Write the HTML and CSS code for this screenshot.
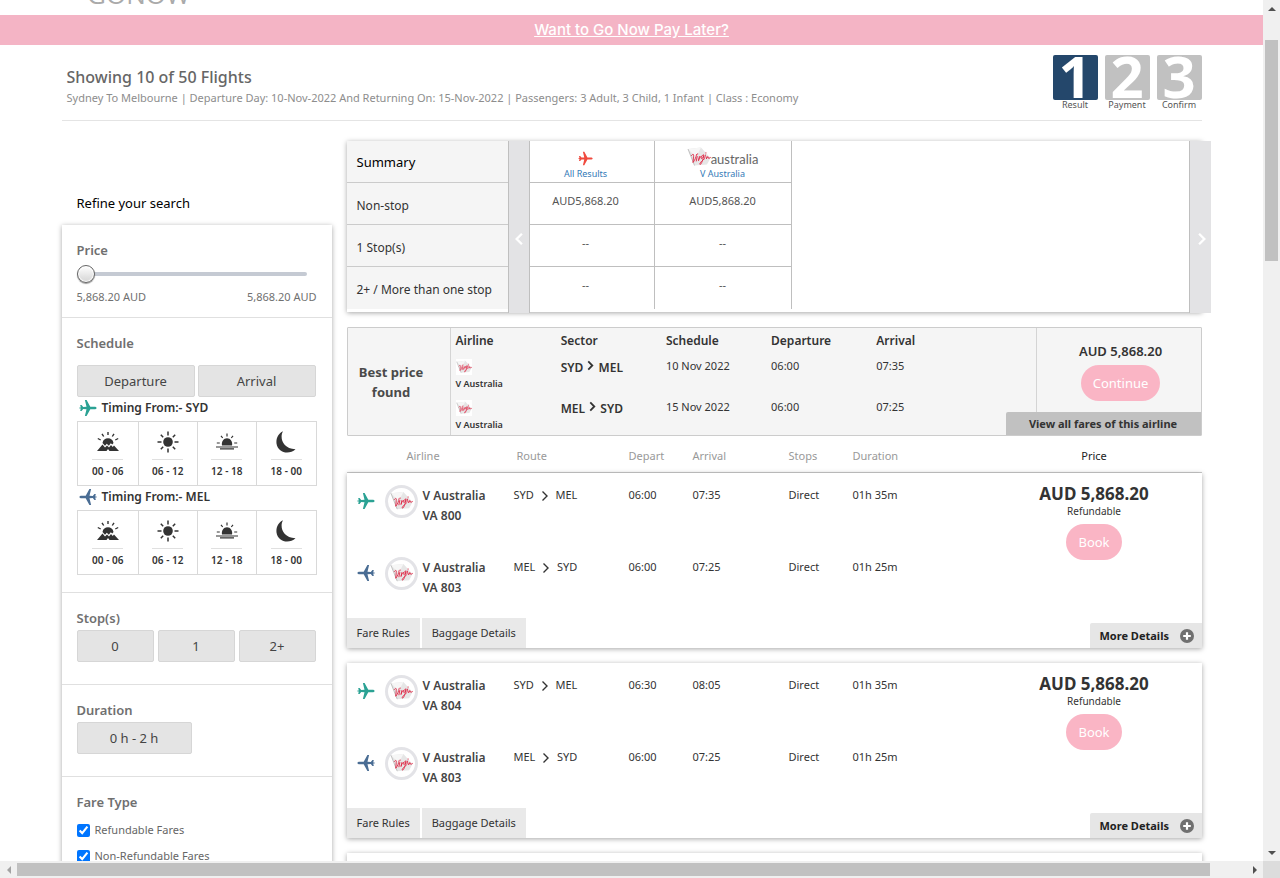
FILE: index.html
```html
<!DOCTYPE html>
<html lang="en">
<head>
<meta charset="utf-8">
<title>Flight results</title>
<meta name="viewport" content="width=device-width, initial-scale=1">
<link rel="stylesheet" href="styles.css">
</head>
<body>
<svg class="sprite" aria-hidden="true">
  <symbol id="plane" viewBox="0 0 18 18"><path d="M17.6 9c0 .8-1 1.300-2.400 1.300h-3.900L7.600 17H5.900l1.600-6.700-3.300-.2L2.600 12H1.200l.6-2.400L.4 9.400v-.8l1.400-.2L1.200 6h1.400l1.600 1.900 3.300-.2L5.900 1h1.700l3.700 6.700h3.900c1.400 0 2.400.5 2.400 1.300z"/></symbol>
  <symbol id="virgin" viewBox="0 0 24 20">
    <path d="M1 2l13-1.500L23.500 11 20 17.500 7.500 18.500z" fill="#e6e6e6"/><path d="M1 2l13-1.500L9 10z" fill="#f6f6f6"/><path d="M1 2l6.500 16.500" stroke="#aaa" fill="none" stroke-width=".7"/>
    <path d="M4.500 8.500C6 6.500 7 7 6.500 9.500L6 15.500C8 13 9 10.500 9.500 7.500M10.200 9.500l-.9 4.500M10.600 6.800v.4M12.400 9.500l-.9 4.200c.5-2.200 1.200-3.800 2.400-4.200M16.500 7.800c-1.600.3-2.600 2.300-2.200 3.600.7.7 2-1 2.400-3-.6 4-2.400 9.600-3.800 9-.8-.9 2.400-4 4.800-5.800M18.400 8l-.6 2.600M20 9.700l-.6 2.200c.5-1.300 1.100-2.300 1.800-2 .4.500-.3 1.500.8 1.500l1.400-.9M18.900 5.700v.4" fill="none" stroke="#e0203f" stroke-width=".9" stroke-linecap="round" stroke-linejoin="round"/>
  </symbol>
  <symbol id="dawn" viewBox="0 0 22 22"><path d="M0 20l5.500-6.500L8 16.500l2-2 2 2 2-2.500 1.700 2L17 14.500 22 20H12.500l-1.500-2-1.500 2z"/><path d="M5.500 12C6 8.800 8.300 7.300 11 7.300s5 1.500 5.500 4.700l-1.200 1.500-1.500-1.200-2 2.500-2-2-1.800 2z"/><path d="M11 1v3M5 2.800l1.700 2.700M17 2.800l-1.700 2.700M.8 7.500l2.900 1.500M21.200 7.500L18.300 9" stroke="currentColor" stroke-width="1.400"/></symbol>
  <symbol id="sun" viewBox="0 0 22 22"><circle cx="11" cy="11" r="4.800"/><path d="M11 .5v4M11 17.500v4M.5 11h4M17.500 11h4M3.800 3.800l2.400 2.400M15.800 15.800l2.400 2.400M18.200 3.800l-2.400 2.400M6.200 15.800l-2.400 2.400" stroke="currentColor" stroke-width="1.500"/></symbol>
  <symbol id="dusk" viewBox="0 0 22 22"><path d="M6 14.500c-.9-4 1.700-7.300 5-7.300s5.900 3.300 5 7.300z"/><path d="M0 16h22M4 17.800h14M11 2.500v3M5 4.800l1.700 2.200M17 4.800L15.300 7M.8 12h3M18.200 12h3" stroke="currentColor" stroke-width="1.200"/></symbol>
  <symbol id="moon" viewBox="0 0 22 22"><path d="M8 .3C4.500 6.200 7.200 17.500 20.500 18.200 14.500 24 3 22.300 1.500 12.500.9 7 3.500 2.300 8 .3z"/></symbol>
  <symbol id="chev" viewBox="0 0 10 12"><path d="M2.500 1.500L7 6l-4.500 4.500" fill="none" stroke="currentColor" stroke-width="2"/></symbol>
  <symbol id="chev-thin" viewBox="0 0 10 12"><path d="M2.500 1.500L7 6l-4.500 4.500" fill="none" stroke="currentColor" stroke-width="1.400"/></symbol>
  <symbol id="plus" viewBox="0 0 14 14"><circle cx="7" cy="7" r="7"/><path d="M7 3.200v7.600M3.200 7h7.600" stroke="#fff" stroke-width="2.200"/></symbol>
</svg>

<div class="window">
<div class="viewport">
  <header class="site-head"><a class="site-logo" href="#">GONOW</a></header>
  <div class="promo"><a href="#">Want to Go Now Pay Later?</a></div>

  <div class="container">
    <section class="page-head">
      <div>
        <h1>Showing 10 of 50 Flights</h1>
        <p>Sydney To Melbourne | Departure Day: 10-Nov-2022 And Returning On: 15-Nov-2022 | Passengers: 3 Adult, 3 Child, 1 Infant | Class : Economy</p>
      </div>
      <ol class="steps">
        <li class="current"><b>1</b><span>Result</span></li>
        <li><b>2</b><span>Payment</span></li>
        <li><b>3</b><span>Confirm</span></li>
      </ol>
    </section>

    <div class="columns">
      <aside class="sidebar">
        <h2 class="refine">Refine your search</h2>
        <div class="panel filters">
          <section>
            <h3><label for="price">Price</label></h3>
            <input class="slider" id="price" type="range" min="0" max="100" value="0">
            <div class="range"><span>5,868.20 AUD</span><span>5,868.20 AUD</span></div>
          </section>
          <section class="schedule">
            <h3>Schedule</h3>
            <div class="tabs2"><button class="chip">Departure</button><button class="chip">Arrival</button></div>
            <h4><svg class="plane out"><use href="#plane"/></svg>Timing From:- SYD</h4>
            <div class="times">
              <button><svg><use href="#dawn"/></svg><span>00 - 06</span></button>
              <button><svg><use href="#sun"/></svg><span>06 - 12</span></button>
              <button><svg><use href="#dusk"/></svg><span>12 - 18</span></button>
              <button><svg><use href="#moon"/></svg><span>18 - 00</span></button>
            </div>
            <h4><svg class="plane back"><use href="#plane"/></svg>Timing From:- MEL</h4>
            <div class="times">
              <button><svg><use href="#dawn"/></svg><span>00 - 06</span></button>
              <button><svg><use href="#sun"/></svg><span>06 - 12</span></button>
              <button><svg><use href="#dusk"/></svg><span>12 - 18</span></button>
              <button><svg><use href="#moon"/></svg><span>18 - 00</span></button>
            </div>
          </section>
          <section class="compact">
            <h3>Stop(s)</h3>
            <div class="stops"><button class="chip">0</button><button class="chip">1</button><button class="chip">2+</button></div>
          </section>
          <section class="compact">
            <h3>Duration</h3>
            <button class="chip duration">0 h - 2 h</button>
          </section>
          <section class="fares">
            <h3>Fare Type</h3>
            <label><input type="checkbox" checked>Refundable Fares</label>
            <label><input type="checkbox" checked>Non-Refundable Fares</label>
          </section>
        </div>
      </aside>

      <main class="results">
        <section class="panel summary">
          <table class="summary-labels">
            <tr><th class="lead">Summary</th></tr>
            <tr><th>Non-stop</th></tr>
            <tr><th>1 Stop(s)</th></tr>
            <tr><th>2+ / More than one stop</th></tr>
          </table>
          <button class="pager prev" aria-label="Previous airlines"><svg><use href="#chev"/></svg></button>
          <table class="summary-fares">
            <tr>
              <th><a href="#"><svg class="all-icon"><use href="#plane"/></svg>All Results</a></th>
              <th><a href="#"><span class="va-logo"><svg><use href="#virgin"/></svg><span>australia</span></span>V Australia</a></th>
            </tr>
            <tr><td>AUD5,868.20</td><td>AUD5,868.20</td></tr>
            <tr><td>--</td><td>--</td></tr>
            <tr><td>--</td><td>--</td></tr>
          </table>
          <button class="pager next" aria-label="Next airlines"><svg><use href="#chev"/></svg></button>
        </section>

        <section class="best">
          <h2>Best price found</h2>
          <table>
            <tr><th>Airline</th><th>Sector</th><th>Schedule</th><th>Departure</th><th>Arrival</th></tr>
            <tr><td class="air"><svg><use href="#virgin"/></svg><b>V Australia</b></td><td class="sector"><b>SYD <svg><use href="#chev"/></svg> MEL</b></td><td>10 Nov 2022</td><td>06:00</td><td>07:35</td></tr>
            <tr><td class="air"><svg><use href="#virgin"/></svg><b>V Australia</b></td><td class="sector"><b>MEL <svg><use href="#chev"/></svg> SYD</b></td><td>15 Nov 2022</td><td>06:00</td><td>07:25</td></tr>
          </table>
          <div class="best-price"><strong>AUD 5,868.20</strong><button class="pill">Continue</button></div>
          <a class="all-fares" href="#">View all fares of this airline</a>
        </section>

        <div class="list-head">
          <span class="h-air">Airline</span><span class="h-route">Route</span><span>Depart</span><span>Arrival</span><span>Stops</span><span>Duration</span><span class="h-price">Price</span>
        </div>

        <article class="panel flight first">
          <div class="flight-body">
            <div class="legs">
              <div class="leg">
                <div class="carrier"><svg class="plane out"><use href="#plane"/></svg><span class="badge"><svg><use href="#virgin"/></svg></span><b>V Australia<br>VA 800</b></div>
                <span class="route">SYD <svg><use href="#chev-thin"/></svg> MEL</span><span>06:00</span><span>07:35</span><span>Direct</span><span>01h 35m</span>
              </div>
              <div class="leg">
                <div class="carrier"><svg class="plane back"><use href="#plane"/></svg><span class="badge"><svg><use href="#virgin"/></svg></span><b>V Australia<br>VA 803</b></div>
                <span class="route">MEL <svg><use href="#chev-thin"/></svg> SYD</span><span>06:00</span><span>07:25</span><span>Direct</span><span>01h 25m</span>
              </div>
            </div>
            <div class="fare"><strong>AUD 5,868.20</strong><small>Refundable</small><button class="pill">Book</button></div>
          </div>
          <footer><button class="tab">Fare Rules</button><button class="tab">Baggage Details</button><button class="more">More Details<svg><use href="#plus"/></svg></button></footer>
        </article>

        <article class="panel flight">
          <div class="flight-body">
            <div class="legs">
              <div class="leg">
                <div class="carrier"><svg class="plane out"><use href="#plane"/></svg><span class="badge"><svg><use href="#virgin"/></svg></span><b>V Australia<br>VA 804</b></div>
                <span class="route">SYD <svg><use href="#chev-thin"/></svg> MEL</span><span>06:30</span><span>08:05</span><span>Direct</span><span>01h 35m</span>
              </div>
              <div class="leg">
                <div class="carrier"><svg class="plane back"><use href="#plane"/></svg><span class="badge"><svg><use href="#virgin"/></svg></span><b>V Australia<br>VA 803</b></div>
                <span class="route">MEL <svg><use href="#chev-thin"/></svg> SYD</span><span>06:00</span><span>07:25</span><span>Direct</span><span>01h 25m</span>
              </div>
            </div>
            <div class="fare"><strong>AUD 5,868.20</strong><small>Refundable</small><button class="pill">Book</button></div>
          </div>
          <footer><button class="tab">Fare Rules</button><button class="tab">Baggage Details</button><button class="more">More Details<svg><use href="#plus"/></svg></button></footer>
        </article>
        <article class="panel next-flight"></article>
      </main>
    </div>
  </div>
</div>

<div class="bar bar-v" aria-hidden="true"><i class="arrow up"></i><i class="thumb"></i><i class="arrow down"></i></div>
<div class="bar bar-h" aria-hidden="true"><i class="arrow left"></i><i class="thumb"></i><i class="arrow right"></i></div>
<div class="corner" aria-hidden="true"></div>
</div>
</body>
</html>
```
FILE: styles.css
```css
* { box-sizing: border-box; }
body { margin: 0; font-family: "Noto Sans", "Open Sans", sans-serif; font-size: 11px; line-height: 20px; color: #333; background: #fff; }
h1, h2, h3, h4, p, ol { margin: 0; padding: 0; font-weight: 400; }
button { font: inherit; color: inherit; border: 0; padding: 0; background: none; cursor: pointer; }
a { text-decoration: none; }
svg { fill: currentColor; flex: none; }
table { border-collapse: separate; border-spacing: 0; }
th, td { padding: 0; text-align: left; }
.sprite { display: none; }

.window { display: grid; grid-template: minmax(0, 1fr) 17px / minmax(0, 1fr) 17px; height: 100vh; }
.viewport { overflow: hidden; }
.container { max-width: 1140px; margin: 0 auto; }
.panel { background: #fff; box-shadow: 0 1px 5px rgba(0, 0, 0, .35); }

.site-head { display: flex; align-items: flex-start; height: 15px; padding: 0 0 0 87px; overflow: hidden; }
.site-logo { flex: none; height: 4px; margin-top: -16px; color: #aaa; font: 400 26px/20px "Open Sans", sans-serif; }
.promo { display: flex; justify-content: center; align-items: center; height: 30px; background: #f4b4c5; }
.promo a { color: #fff; font: 500 15px/20px "Inter", sans-serif; text-decoration: underline; }

.page-head { display: flex; justify-content: space-between; height: 76px; padding: 10px 0 0 5px; border-bottom: 1px solid #e4e4e4; }
.page-head h1 { margin-top: 12px; font-size: 16px; font-weight: 500; color: #666; }
.page-head p { margin-top: 1px; color: #8d8d8d; }
.steps { display: flex; gap: 7px; list-style: none; }
.steps li { width: 45px; text-align: center; font-size: 9px; line-height: 10px; }
.steps b { display: block; height: 45px; border-radius: 2px; background: #c1c1c1; color: #fff; font: 700 58px/41px "Open Sans", sans-serif; overflow: hidden; }
.steps .current b { background: #24476b; }
.steps span { display: block; color: #555; }

.columns { display: flex; align-items: flex-start; gap: 15px; padding-top: 20px; }
.sidebar { width: 270px; flex: none; padding-top: 52px; }
.refine { padding-left: 15px; margin-bottom: 12px; font-size: 13px; color: #000; }
.filters section { padding: 15px; border-bottom: 1px solid #e0e0e0; }
.filters h3 { font-size: 13px; font-weight: 600; color: #707070; }
.slider { display: block; appearance: none; width: 230px; height: 18px; margin: 5px 0 4px; background: none; }
.slider::-webkit-slider-runnable-track { height: 4px; border-radius: 2px; background: #c5cad3; }
.slider::-webkit-slider-thumb { appearance: none; width: 18px; height: 18px; margin-top: -7px; border: 1px solid #666; border-radius: 50%; background: linear-gradient(#fff, #d4d4d4); box-shadow: inset 0 0 1px 1px #fff, 0 1px 1px rgba(0, 0, 0, .4); }
.range { display: flex; justify-content: space-between; color: #707070; margin: 0 0 -5px; }
.chip { height: 32px; border: 1px solid #d6d6d6; border-radius: 2px; background: #e4e4e4; color: #444; font-size: 13px; }
.tabs2 { display: grid; grid-template-columns: 1fr 1fr; gap: 3px; margin: 12px 1px 0 0; }
.filters h4 { display: flex; align-items: center; gap: 5px; height: 24px; padding: 0 0 2px 2px; font-size: 12px; font-weight: 600; }
.plane { width: 18px; height: 18px; }
.out { color: #2ba294; }
.back { color: #4a6d94; transform: scaleX(-1); }
.filters section.schedule { padding-bottom: 17px; }
.times { display: grid; grid-template-columns: 61fr 59fr 60fr 60fr; border: 1px solid #d9d9d9; }
.times button { display: flex; flex-direction: column; align-items: center; height: 63px; padding: 9px 4px 0; border-left: 1px solid #d9d9d9; font-size: 10px; font-weight: 600; }
.times button:first-child { border-left: 0; }
.times svg { width: 22px; height: 22px; }
.times span { margin-top: 6px; border-top: 1px solid #e0e0e0; line-height: 22px; }
.filters section.compact { padding: 15px 16px 22px 15px; }
.compact h3 { margin-bottom: 2px; }
.stops { display: grid; grid-template-columns: repeat(3, 1fr); gap: 4px; }
.duration { width: 115px; }
.fares label { display: flex; align-items: center; gap: 5px; height: 26px; color: #666; }
.fares h3 { margin-bottom: 5px; }
.fares input { width: 13px; height: 13px; margin: 0; accent-color: #0075ff; }

.results { flex: 1; min-width: 0; }
.summary { display: flex; height: 171px; }
.summary-labels { width: 161px; height: 168px; background: #f5f5f5; }
.summary-labels th { height: 42px; padding: 4px 0 0 10px; border-bottom: 1px solid #cbcbcb; font-weight: 400; font-size: 12px; }
.summary-labels .lead { padding-top: 0; font-size: 13px; color: #000; }
.summary-labels tr:last-child th, .summary-fares tr:last-child td { border-bottom: 0; }
.pager { width: 22px; height: 172px; border: 1px solid #bfbfbf; border-width: 0 1px; background: #e3e3e5; color: #fff; flex: none; padding-top: 29px; }
.pager svg { width: 12px; height: 14px; }
.prev svg { transform: scaleX(-1); }
.next { margin: 0 -9px 0 auto; border-right: 0; padding-left: 4px; }
.summary-fares { height: 168px; text-align: center; }
.summary-fares th, .summary-fares td { width: 125px; height: 42px; padding-right: 12px; text-align: center; border: 1px solid #bfbfbf; border-width: 0 1px 1px 0; font-weight: 400; }
.summary-fares th + th, .summary-fares td + td { width: 137px; padding-right: 0; }
.summary-fares td { color: #555; padding-bottom: 6px; }
.summary-fares a { display: flex; flex-direction: column; align-items: center; justify-content: flex-end; height: 38px; font-size: 9px; line-height: 14px; color: #337ab7; }
.all-icon { width: 15px; height: 15px; margin-bottom: 1px; color: #f04a3e; }
.va-logo { display: flex; align-items: flex-end; height: 20px; color: #666; font: 13px/16px "Lato", sans-serif; }
.va-logo svg { width: 24px; height: 20px; }

.best { display: flex; position: relative; height: 109px; margin-top: 15px; border: 1px solid #ccc; border-radius: 1px; background: #f5f5f5; }
.best h2 { display: flex; align-items: center; width: 103px; padding: 0 23px 0 8px; border-right: 1px solid #d4d4d4; text-align: center; font-size: 13px; font-weight: 700; color: #4a4a4a; }
.best table { width: 526px; height: 107px; table-layout: fixed; }
.best th, .best td { padding-left: 5px; vertical-align: top; }
.best th { height: 26px; padding-top: 3px; color: #333; font-size: 12px; font-weight: 600; }
.best td { height: 40px; padding-top: 2px; }
.best .air { line-height: 12px; padding-top: 5px; font-size: 9px; font-weight: 600; }
.air svg { display: block; width: 16px; height: 16px; margin-bottom: 3px; background: #fff; }
.air b, .sector b { font-weight: 600; }
.best .sector { padding-top: 4px; font-size: 12px; }
.sector svg { width: 9px; height: 13px; }
.best-price { width: 165px; margin-left: auto; padding: 13px 0 0 4px; border-left: 1px solid #d4d4d4; text-align: center; }
.best-price strong { display: block; margin-bottom: 4px; font-size: 13px; font-weight: 600; }
.pill { height: 36px; padding: 0 12px; border-radius: 18px; background: #fab5c5; color: #fff; font-size: 13px; }
.all-fares { position: absolute; right: 0; bottom: 0; width: 195px; height: 23px; border-radius: 2px 0 0 0; background: #c1c1c1; color: #333; font-weight: 700; line-height: 23px; text-align: center; }

.list-head, .leg { display: grid; grid-template-columns: 167fr 115fr 64fr 96fr 64fr 134fr; }
.list-head { grid-template-columns: 167fr 115fr 64fr 96fr 64fr 134fr 215fr; height: 37px; padding-top: 10px; border-bottom: 1px solid #ccc; color: #999; }
.h-air { padding-left: 60px; }
.h-route { padding-left: 3px; }
.h-price { text-align: center; color: #222; }
.flight { margin-top: 15px; }
.flight.first { margin-top: 0; }
.flight-body { display: grid; grid-template-columns: 640fr 215fr; height: 145px; }
.legs { padding-top: 12px; display: flex; flex-direction: column; gap: 32px; }
.leg { height: 40px; }
.carrier { display: flex; align-items: center; height: 42px; padding-left: 10px; font-size: 12px; color: #444; }
.carrier .plane { margin-bottom: 10px; }
.carrier b { font-weight: 600; margin-left: 5px; }
.badge { display: flex; align-items: center; justify-content: center; width: 33px; height: 33px; margin: 0 0 10px 10px; border: 3px solid #e3e3e7; border-radius: 50%; }
.badge svg { width: 23px; height: 20px; }
.route svg { width: 10px; height: 12px; margin: 0 3px; vertical-align: -3px; }
.fare { padding-top: 11px; text-align: center; }
.fare strong { display: block; font-size: 17px; font-weight: 700; line-height: 20px; }
.fare small { display: block; margin-bottom: 6px; font-size: 10px; line-height: 14px; }
.flight footer { display: flex; gap: 2px; align-items: flex-end; height: 30px; }
.tab { height: 30px; padding: 0 10px; background: #e9e9e9; }
.more { display: flex; align-items: center; justify-content: space-between; width: 112px; height: 25px; margin-left: auto; padding: 0 8px 0 10px; background: #e6e6e6; color: #222; font-weight: 700; border-radius: 2px 0 0 0; }
.more svg { width: 14px; height: 14px; color: #707070; }
.next-flight { height: 175px; margin-top: 15px; }

.bar { display: flex; align-items: center; background: #f0f0f0; }
.bar-v { flex-direction: column; }
.bar-h { grid-row: 2; }
.bar .thumb { background: #c1c1c1; }
.bar-v .thumb { width: 13px; height: 221px; margin: 23px 0 auto; }
.bar-h .thumb { height: 13px; width: 1193px; margin: 0 auto 0 0; }
.arrow { display: flex; align-items: center; justify-content: center; width: 17px; height: 17px; flex: none; }
.arrow::before { content: ""; border: 4px solid transparent; }
.up::before { border-bottom-color: #505050; border-top: 0; }
.down::before { border-top-color: #505050; border-bottom: 0; }
.left::before { border-right-color: #a3a3a3; border-left: 0; }
.right::before { border-left-color: #505050; border-right: 0; }
.corner { background: #dcdcdc; }
```
